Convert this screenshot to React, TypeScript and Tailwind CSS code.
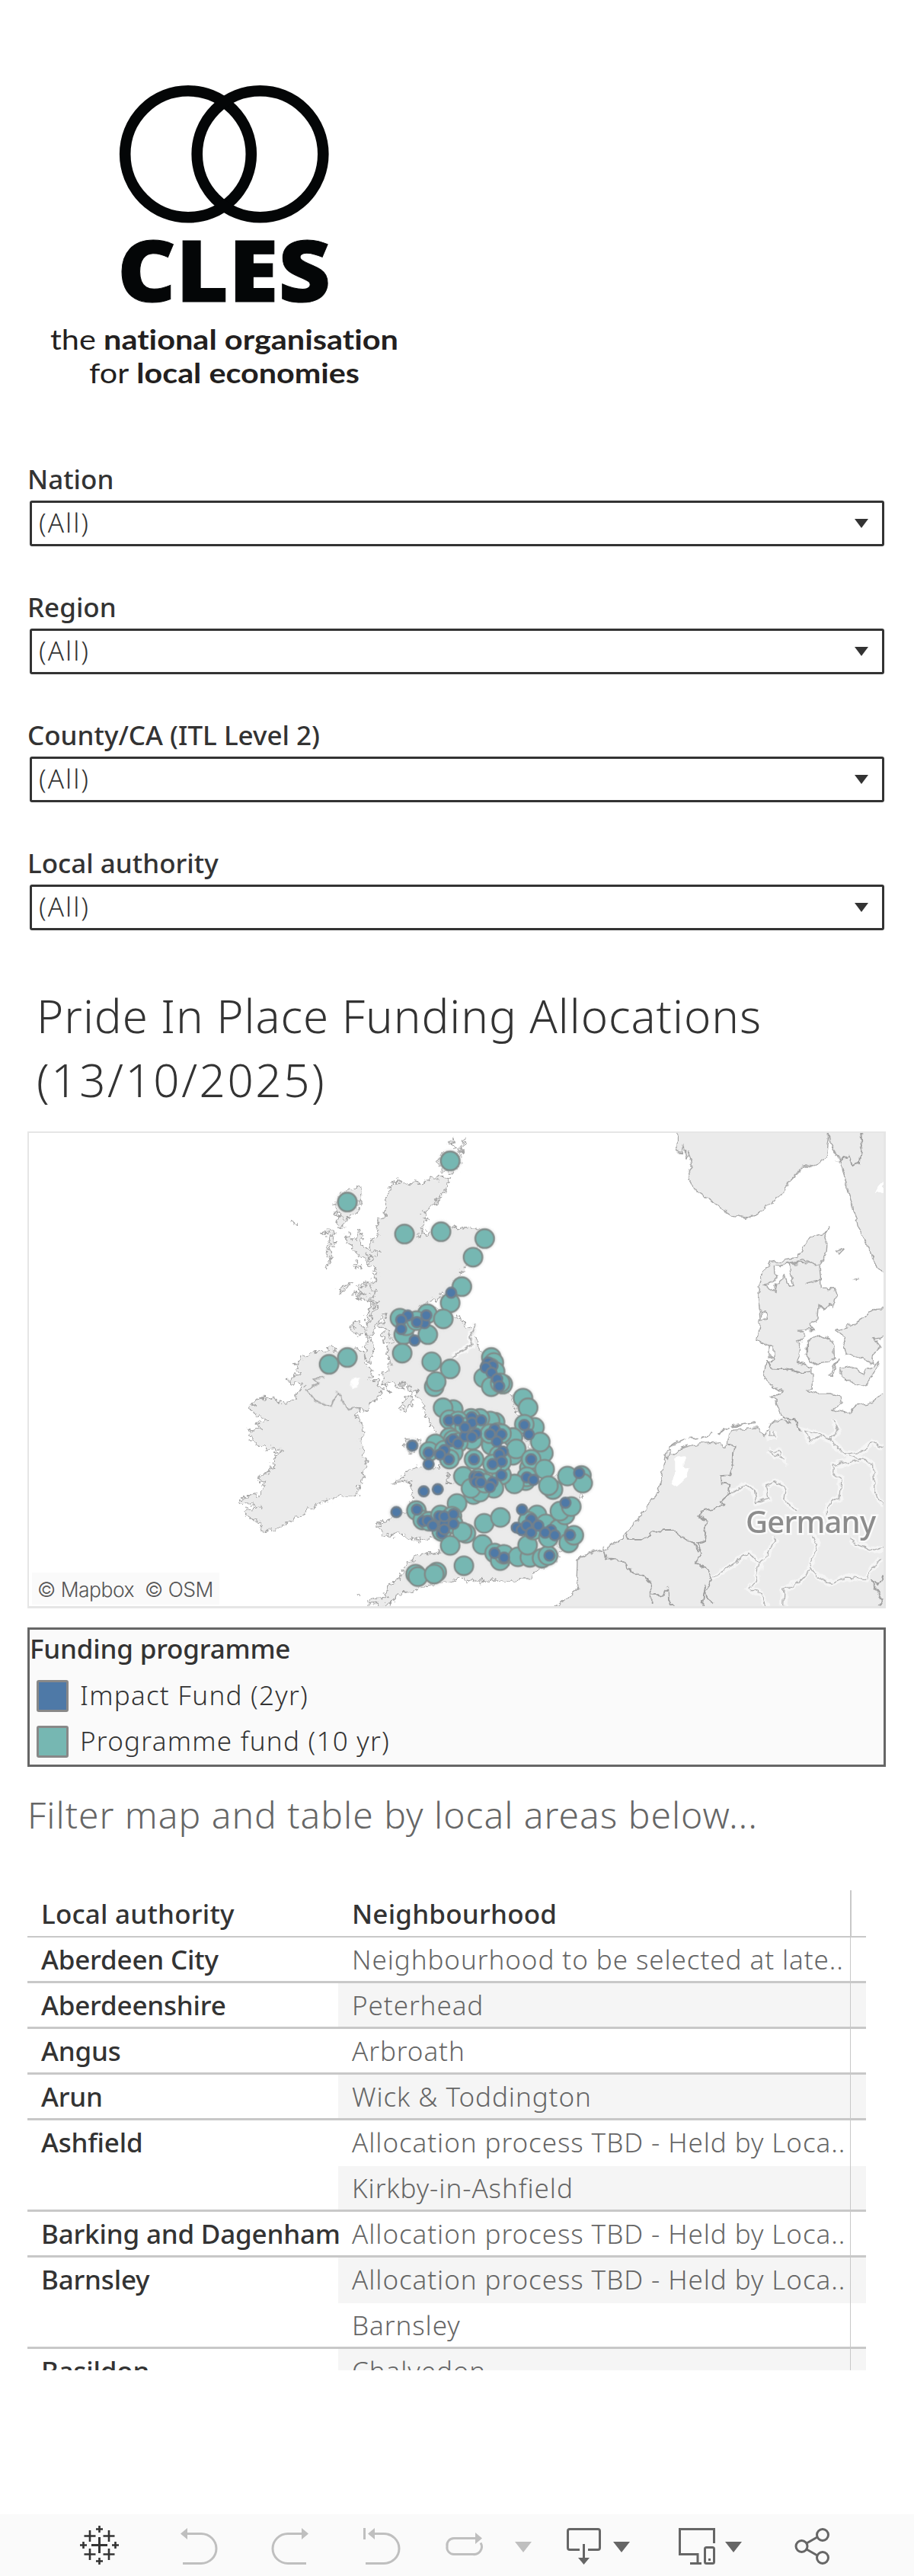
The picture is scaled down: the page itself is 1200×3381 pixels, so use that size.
import { Fragment } from "react";

const filters = ["Nation", "Region", "County/CA (ITL Level 2)", "Local authority"];

const legend = [
  { label: "Impact Fund (2yr)", color: "bg-[#4e79a7]" },
  { label: "Programme fund (10 yr)", color: "bg-[#76b7b2]" },
];

const TBD = "Allocation process TBD - Held by Loca..";

const areas = [
  { name: "Aberdeen City", places: ["Neighbourhood to be selected at late.."] },
  { name: "Aberdeenshire", places: ["Peterhead"] },
  { name: "Angus", places: ["Arbroath"] },
  { name: "Arun", places: ["Wick & Toddington"] },
  { name: "Ashfield", places: [TBD, "Kirkby-in-Ashfield"] },
  { name: "Barking and Dagenham", places: [TBD] },
  { name: "Barnsley", places: [TBD, "Barnsley"] },
  { name: "Basildon", places: ["Chalvedon"] },
];

// Map marks, in the same units as the British Isles outlines
const programmeFund = [
  [873, 131], [468, 293], [693, 419], [837, 410], [1009, 437], [963, 510], [919, 626], [873, 690],
  [675, 750], [783, 733], [846, 753], [690, 815], [700, 780], [740, 760], [785, 815], [684, 888],
  [800, 922], [873, 950], [468, 905], [396, 932], [810, 1020], [818, 1000], [1035, 905], [1045, 925],
  [1030, 945], [1050, 960], [1005, 985], [1035, 1020], [1080, 1010], [1070, 1005], [885, 1110],
  [845, 1103], [1160, 1065], [1180, 1103], [1205, 1180], [1165, 1168], [1240, 1282], [1228, 1238],
  [1120, 1220], [1120, 1290], [1133, 1265], [1185, 1340], [1192, 1306], [1245, 1345], [1390, 1370],
  [1395, 1400], [1335, 1372], [1278, 1425], [1260, 1410], [1170, 1390], [1175, 1375], [1126, 1403],
  [1075, 1368], [1045, 1420], [965, 1445], [990, 1435], [925, 1373], [955, 1420], [985, 1380],
  [1010, 1400], [1050, 1160], [1030, 1155], [990, 1145], [955, 1145], [870, 1150], [905, 1155],
  [930, 1180], [990, 1200], [960, 1230], [870, 1220], [885, 1230], [905, 1240], [815, 1245],
  [790, 1275], [850, 1270], [885, 1280], [870, 1305], [967, 1306], [1035, 1250], [1065, 1290],
  [1075, 1315], [1040, 1325], [1060, 1200], [1030, 1205], [1075, 1205], [900, 1480], [740, 1508],
  [765, 1545], [790, 1550], [835, 1525], [850, 1550], [840, 1590], [880, 1530], [885, 1560],
  [935, 1598], [920, 1592], [873, 1645], [1007, 1558], [1071, 1535], [1000, 1642], [1048, 1675],
  [1070, 1705], [1085, 1680], [1140, 1690], [1187, 1692], [1178, 1644], [1235, 1695], [1258, 1685],
  [1215, 1525], [1180, 1550], [1200, 1585], [1250, 1560], [1260, 1615], [1300, 1580], [1340, 1635],
  [1360, 1605], [1325, 1525], [1305, 1510], [1350, 1492], [927, 1725], [737, 1758], [746, 1768],
  [820, 1750], [810, 1758],
];

const impactFund = [
  [877, 650], [706, 740], [680, 757], [680, 793], [772, 770], [742, 766], [779, 739], [733, 838],
  [1023, 925], [1040, 938], [1013, 945], [1036, 965], [1058, 990], [1066, 1018], [724, 1252],
  [788, 1280], [788, 1325], [850, 1270], [833, 1287], [868, 1306], [868, 1153], [904, 1152],
  [958, 1140], [959, 1162], [995, 1152], [931, 1215], [931, 1180], [975, 1205], [959, 1218],
  [875, 1235], [885, 1227], [904, 1244], [1048, 1188], [1030, 1207], [1075, 1208], [1057, 1236],
  [967, 1306], [1080, 1275], [1066, 1287], [1076, 1315], [1040, 1325], [1165, 1171], [1183, 1208],
  [1192, 1306], [1381, 1360], [1175, 1377], [1201, 1387], [1075, 1368], [970, 1375], [985, 1375],
  [975, 1395], [994, 1396], [1040, 1397], [1030, 1415], [769, 1432], [824, 1424], [661, 1514],
  [742, 1504], [765, 1550], [785, 1548], [805, 1567], [830, 1530], [850, 1560], [850, 1531],
  [886, 1522], [886, 1560], [840, 1598], [850, 1582], [1156, 1504], [1192, 1542], [1135, 1575],
  [1155, 1585], [1174, 1567], [1220, 1567], [1192, 1595], [1270, 1585], [1247, 1595], [1285, 1605],
  [1345, 1604], [1327, 1477], [1264, 1685], [1048, 1675], [1085, 1693],
];

const isles = [
  // Great Britain
  "M652 205l8 12 8-8 10 12 2-8 14 14 6-12 16 10 12-10 22 4 20-6 20-4 6-6 20-6 10 4 8-8h34l-4 12 4 20-8 23-16 14-24 24-12 16-28 22-15 30 22 8-22 28-18 42 20-24 20 10 60-20 30-5 50 3 46-5 35 32-40 60-30 60-60 90-90 60-40 15 70 5 35 8 22 16 43 16 15 30 35 35 8 25 22 50 30 70 30 40 70 70 20 90 35 80 25 80-40 60 80-16 58 10 70 28 14 54-40 44-60 60-40 30-70 30 100 4 36 36-30 44-70 28-30 43-70 4h-80l-60 3-25-10-10 14-14-16-60 10-60 14-44 6-42 24-54 10-28 38 6-16-30 30-6 24-18-20-12-18-30 8-4-16 26-14 38-2 22-40 28-26 30-30 10-44 30-2 8-28 30-6 38 2 50-20-10-40-30-6-60 14-50-10-40-26-40 24-42-46 26-14 50-26 50-24 14-46-6-40-2-30-38 10-30 4 40-28 15-16 35-20 50-10 40 20 20-40-20-60-10-50-20-20-30-80-20-40-10-30-22 10-8-14-10 4-15-34 4 44-24-14-30-24-8 4 16 44-28-36-8-34 16-10 22-36-20-40 10-50-10-40-30-15 36-54-20 8-26 42-24 50 14 40-12 48-26-5 14-70-5-40 20-64-16-10 22-40-40-40 42 20-2-14-70 8-12-14 48 10-20-24 40 10-26-26 38 4-10-20 26-4-14-20 20-6-12-16 14-8-36-6-4-60 12-40 30-20-8-30 10-40 20-10 8-40-4-20z",
  // Ireland
  "M235 992l40-17-10-40 35-30 16-14 24-6 50-8 10-17 30 20 90-4 15 14 10 40 30 42-25 20 40 10 15 32-15 40-30 6-20 35-25-5-15 8 18 35 12 40-10 50 23 70-13 60-20 40-2 40-58-2-40 12-40 10-70 45-60 35-80 35-35-10 5-25-55-20-15-25 70-15-90-17 20-23 70-10 10-50-25-10 55-40 15-60 35-15-70-5-60-30-10-40 50-10-20-15 45-20-45-15-30-30 30-30 20-10 60 5 10 15 65-10-5-20 40-35-60-15z",
  // Hebrides and the western islands
  "M515 230l8 16-4 44-18 50-40 20-40-26-4-24 24-50 40-20z",
  "M440 350l30 12-24 26-24-12zM372 412l20-10 22 4-4 24-20-8zM395 432l22-8 4 36-18 12 6 44-16 8-8-44 12-22zM384 545l20-25-4 20-20 18z",
  "M510 398l18 24-6 40 30 18 50 10-40 20-42 4-50-62-12-8 22-24 16 20z",
  "M490 604l-14 20-38 26-4-12 40-22zM500 530l18 10-8 14-14-8zM550 505l20 8-20 22-8-8z",
  "M510 620l40-8 30 40-40 24-40 6 40-30-30-16z",
  "M540 740l30-40 20-10-30 50-14 40zM515 760l24 34-24 24-28-16 6-34z",
  "M618 798l14-2 12 40-10 14-20-10-6-26zM832 110l30-16 50 10 6 40-40 36-46-20z",
  "M866 55l18-6-4 20 18 12 24-20 14-18-6 26-20 14 10 16-26-20zM718 1045l8 4-4 40-32 26-18 0 20-40z",
  "M690 1250l20-24 40 4 10 30-30 22-20-6zM862 1362l8 8-8 20 10 4-14 2 4-18z",
  "M505 1842l10-4-4 10zM252 372h12l-6 6z",
];

const mainland = [
  // Norway and Sweden
  "M325 -20l5 35-4 60 20 2 8-20 12 50 6-30 14 40-16 28 4 20 23 34 95 56 50 27 55 10 65-25 70-45 40-50 60-50 30 3 50-28 10-65V-20z",
  "M925-20l0 40 5 30 35 50 20 50 15 60 20 50 20 60 40 60 35 75 40 13V-20z",
  // Jutland down to France
  "M925 317l-16 24 9 29-3 35-27 35 7 75 55 2 10 28-25 35-10-14-20 20-20-16-3 45-32 15 15 20-55 5 20 15-30 20 15 25-15 40 60 15 2 65-22 7 40 13 50 0 45 10 3 20-38 20 60 15 30-25 60-10 60-40v740H-219l123-80 36-24-9-22 3-69 27-14 84-23 65-32 40-40 55-55 50-55 20-90 10-24 60-26 60-14 90-6 12 18 12-2 4-36 24-18 90-8 35 30 15-35 30-20 60 10-40-25-20-45-20-10 45-20-55-25-20-25 10-45 30-5-5-40-60-28 10-52-5-60 2-60 13-40 35-38 40-4 60-8 50-65 55-10z",
  // Danish islands
  "M838 690l52-25 24 12 30 12 2 50-30 14-56 6-22-24zM955 650l60-14 36-20 60-32 40-2v88l-50 10 26 26-36 30 10 22-30-10-30-12-50-8-10-34 12-20zM962 775l40-8 30 10 30 20 10-20 50-22-50 75-50-12-40-12zM940 800l20-62-16 30-14 30zM955 396l30-8-20 16zM1022 488h18l-10 5z",
  // Frisian islands
  "M278 1056l14-22 10 4-10 30zM292 1030l36-22 34-8-34 14zM374 998l30-2-30 4zM420 996l50-12-50 14zM486 980l44-14-40 16zM542 960l60-10-56 12zM608 950l32-2-30 4z",
];

const inlandWater = [
  "M706 448l60-12 4 30 16 44-18-4-14-30-34 24-6 28-44-20 32-10 26-22-20-4z",
  "M655 588l20 4 4 22-22 12zM690 700l18 4v40l-18-6z",
  "M762 438l60-10 62 14-62-8zM836 500l56-12-28 12z",
];

const lakes = ["M316 1066l40-10 0 34 24 10-24 34-30 20-18-8 8-40z", "M1140 130v80l-30 0 30-40z"];

const nationalBorders = [
  "M1050 15l6 44-10 56-30 8-12-38-44 26",
  "M680 745l20 28 50 2 60 12 44 0",
  "M525 1018l26 4-4 60-12 36-40 2 2 24 38 4-4 30-28 22 8 14-90 20-6 14 28 20-8 60-30 8 20 30-24 40 40 8 30 40-40 40-10 60",
  "M128 1305l10 20 50 0 60-30 60-2 40 26 44 16 20 28M40 1345l10 40 60 4 24 30 60 20 30 30v60M222 1500l50 4 20-24 2 40 30 28M430 1470l10 40 34 20M1140 1440l-20 30-30-14 46 60-16 24M740 935l50 6 20 34",
];

const stateBorders = [
  "M945 935l14 40-30 30-60-24-40-8 20 34 40-16M929 1005l60 44 60-6 50-30 40 14M1000 1055l60 10 40 24 4 80 34 46M1040 1070l-94 14-2 30 28 16-6 60-50 24v40",
  "M535 1178l60-30 36 20 10 36 44-10-12-40 36-14 50 20-10 36 50 40",
  "M460 1450l60-30 90-50 40 30 40-34 24-46M650 1400l-10 60-30 20 50 20 24 44M860 1310l20 30-30 70 10 20 70 36 60-20 80 6 60-70M850 1420l-40 40-60 24-4 56M1010 1320l20 20 70 20 40-10M690 1040l50 24-10-20-40-8M692 975v20h16v-20",
];

const BRITISH_ISLES = "translate(300 1480) scale(0.33333)";
const EUROPE = "translate(780 1480) scale(0.33333 0.40816)";

const Logo = () => (
  <svg className="block h-[460px] w-[520px]" viewBox="36 80 520 460" role="img" aria-label="CLES">
    <g fill="none" stroke="#040607">
      <ellipse cx="247" cy="202.3" rx="82.8" ry="83" strokeWidth="14.6" />
      <ellipse cx="341.5" cy="202.3" rx="82.8" ry="83" strokeWidth="14.6" />
    </g>
    <text
      x="154"
      y="395.5"
      textLength="280"
      lengthAdjust="spacingAndGlyphs"
      fill="#040607"
      stroke="#040607"
      strokeWidth="1"
      className="font-['Open_Sans'] text-[112px] font-extrabold"
    >
      CLES
    </text>
    <g fill="#231f20" className="font-[Lato] text-[37px] font-bold [font-variant-ligatures:none]">
      <text x="66" y="459" textLength="457" lengthAdjust="spacingAndGlyphs">
        <tspan fontWeight="400">the</tspan> national organisation
      </text>
      <text x="117" y="502.5" textLength="355" lengthAdjust="spacingAndGlyphs">
        <tspan fontWeight="400">for</tspan> local economies
      </text>
    </g>
  </svg>
);

const Filter = ({ label }: { label: string }) => (
  <div className="mb-[55px]">
    <div className="h-[53px] pt-px text-[35px] leading-[48px] font-medium">{label}</div>
    <button className="mx-[3px] flex h-[60px] w-[1122px] items-center justify-between rounded-[3px] border-3 border-[#333] pr-[18px] pb-[2px] pl-[9px] text-[35px] font-light tracking-[2px]">
      (All)
      <svg className="mt-[2px] h-3 w-[18px]" viewBox="0 0 18 12">
        <path d="M0 0h18l-9 12z" fill="#333" />
      </svg>
    </button>
  </div>
);

const FundingMap = () => (
  <div className="relative mt-[26px] h-[626px] w-[1127px] overflow-hidden border-t-2 border-r-3 border-b-3 border-l-2 border-[#e6e6e6]">
    <svg className="block h-[621px] w-[1122px]" viewBox="38 1487 1122 621">
      <defs>
        <filter id="coast" x="-5%" y="-5%" width="110%" height="110%" colorInterpolationFilters="sRGB">
          <feTurbulence type="fractalNoise" baseFrequency="0.14" numOctaves="3" seed="4" />
          <feDisplacementMap in="SourceGraphic" scale="14" xChannelSelector="R" yChannelSelector="G" />
        </filter>
        <filter id="border" x="-5%" y="-5%" width="110%" height="110%" colorInterpolationFilters="sRGB">
          <feTurbulence type="fractalNoise" baseFrequency="0.1" numOctaves="2" seed="9" />
          <feDisplacementMap in="SourceGraphic" scale="9" xChannelSelector="R" yChannelSelector="G" />
        </filter>
        <filter id="glow" x="-10%" y="-10%" width="120%" height="120%">
          <feGaussianBlur stdDeviation="3" />
        </filter>
      </defs>

      <g filter="url(#coast)" fill="#ebebeb" stroke="#a6a6a6" strokeWidth="1.4">
        <g transform={BRITISH_ISLES}>
          {isles.map((d) => (
            <path key={d} d={d} vectorEffect="non-scaling-stroke" />
          ))}
        </g>
      </g>
      <g filter="url(#border)" fill="#ebebeb" stroke="#a6a6a6" strokeWidth="1.4">
        <g transform={EUROPE}>
          {mainland.map((d) => (
            <path key={d} d={d} vectorEffect="non-scaling-stroke" />
          ))}
          {inlandWater.map((d) => (
            <path key={d} d={d} fill="#fff" vectorEffect="non-scaling-stroke" />
          ))}
          {lakes.map((d) => (
            <path key={d} d={d} fill="#fff" stroke="none" />
          ))}
        </g>
      </g>

      <g filter="url(#border)" fill="none">
        <g transform={EUROPE}>
          {stateBorders.map((d) => (
            <Fragment key={d}>
              <path d={d} stroke="#f5f5f5" strokeWidth="8" vectorEffect="non-scaling-stroke" />
              <path d={d} stroke="#b0b0b0" strokeWidth="1.3" vectorEffect="non-scaling-stroke" />
            </Fragment>
          ))}
          {nationalBorders.map((d) => (
            <path key={d} d={d} stroke="#9e9e9e" strokeWidth="1.8" vectorEffect="non-scaling-stroke" />
          ))}
        </g>
        <g transform={BRITISH_ISLES}>
          <path d="M485 990l30-6-6 34-28 8z" fill="#fff" />
          <path d="M975 775l-25 45 10 35-50 30-25 20" stroke="#f8f8f8" strokeWidth="24" />
          <path d="M975 775l-25 45 10 35-50 30-25 20M380 982l-45 6 20 16-47 31 32 40 60 22 30-54 40 68 45-10" stroke="#9e9e9e" strokeWidth="5" />
        </g>
      </g>

      <g transform={BRITISH_ISLES}>
        <g filter="url(#glow)" fill="#e4e4e4" opacity="0.6">
          {programmeFund.map(([x, y]) => (
            <circle key={`${x}-${y}`} cx={x} cy={y} r="46" />
          ))}
          {impactFund.map(([x, y]) => (
            <circle key={`${x}-${y}`} cx={x} cy={y} r="31" />
          ))}
        </g>
        <g fill="#76b7b2" stroke="#808b89" strokeWidth="7">
          {programmeFund.map(([x, y]) => (
            <circle key={`${x}-${y}`} cx={x} cy={y} r="37" />
          ))}
        </g>
        <g fill="#4e79a7" stroke="#72808c" strokeWidth="8">
          {impactFund.map(([x, y]) => (
            <circle key={`${x}-${y}`} cx={x} cy={y} r="20" />
          ))}
        </g>
      </g>

      <text
        x="979"
        y="2012"
        textLength="171"
        fill="#8c8c8c"
        stroke="#fafafa"
        strokeWidth="5"
        paintOrder="stroke"
        className="font-['Noto_Sans'] text-[40px] font-medium"
      >
        Germany
      </text>
    </svg>
    <div className="absolute bottom-[2px] left-1 h-[42px] w-[246px] bg-[#fafafa] pl-[7px] font-[Inter] text-[26.5px] leading-[45px] font-light tracking-[-0.5px] whitespace-pre text-[#555]">
      © Mapbox  © OSM
    </div>
  </div>
);

const Legend = () => (
  <div className="mt-[25px] h-[183px] w-[1127px] border-3 border-[#666] bg-[#fafafa]">
    <div className="pt-px text-[35px] leading-[48px] font-medium tracking-[-0.2px]">Funding programme</div>
    {legend.map(({ label, color }, i) => (
      <div key={label} className={`flex h-[60px] items-center pl-[9px] ${i === 0 ? "mt-[8px]" : ""}`}>
        <span className={`h-[42px] w-[42px] rounded-[3px] border-3 border-[#888] ${color}`} />
        <span className="ml-[15px] pb-[3px] text-[35px] leading-[57px] font-light tracking-[1.25px]">{label}</span>
      </div>
    ))}
  </div>
);

const AreaTable = () => {
  let row = 0;
  return (
    <div className="mt-[69px] h-[630px] w-[1101px] overflow-hidden text-[35px] whitespace-nowrap">
      <div className="flex h-[62px] border-b-2 border-[#c8c8c8] leading-[62px] font-medium tracking-[0.2px]">
        <div className="w-[426px] pl-[18px]">Local authority</div>
        <div className="w-[654px]">Neighbourhood</div>
        <div className="border-l-2 border-[#c8c8c8]" />
      </div>
      {areas.map(({ name, places }) => (
        <div key={name} className="flex border-b-3 border-[#c8c8c8]">
          <div className="w-[408px] pl-[18px] leading-[57px] font-medium tracking-[-0.2px]">{name}</div>
          <div>
            {places.map((place, i) => (
              <div
                key={place}
                className={`flex ${i === places.length - 1 ? "h-[57px]" : "h-[60px]"} ${row++ % 2 ? "bg-[#f5f5f5]" : ""}`}
              >
                <div className="w-[672px] pl-[18px] leading-[57px] font-light tracking-[0.93px] text-[#666]">{place}</div>
                <div className="w-[21px] border-l border-[#c8c8c8]" />
              </div>
            ))}
          </div>
        </div>
      ))}
    </div>
  );
};

const Toolbar = () => (
  <div className="mt-[189px] h-[81px] bg-[#fafafa]">
    <svg className="block h-[81px] w-[1200px]" viewBox="0 0 1200 81" fill="none" strokeWidth="3">
      {/* Tableau mark */}
      <g stroke="#333">
        <path d="M130.5 30v21M120 40.5h21" />
        <path d="M118 21v15M110.5 28.5h15M143 21v15M135.5 28.5h15M118 45v15M110.5 52.5h15M143 45v15M135.5 52.5h15" strokeWidth="2.6" />
        <path d="M130.5 15v9M126 19.5h9M130.5 57v9M126 61.5h9M109.500 36v9M105 40.5h9M151.5 36v9M147 40.5h9" strokeWidth="2.6" />
      </g>
      <g stroke="#bfbfbf">
        <path d="M245 25.5h19a20 19.5 0 0 1 0 39h-24" />
        <path d="M397 25.5h-19a20 19.5 0 0 0 0 39h24" />
        <path d="M478.5 18v15M490 25.5h14a20 19.5 0 0 1 0 39h-24" />
        <path d="M625 31.5h-29a9 9 0 0 0-9 10.5 9 9 0 0 0 9 10.5h25a10 10 0 0 0 10-15" />
      </g>
      <path
        d="M237 25.5l9-7.5v15zM405 25.5l-9-7.5v15zM483 25.5l9-7.5v15zM633 31.5l-9-7.5v15zM676 36h22l-11 14z"
        fill="#bfbfbf"
      />
      <g stroke="#666">
        <path d="M761 46.5h-13a2.5 2.5 0 0 1-2.500-2.5V22a2.5 2.5 0 0 1 2.5-2.500h37a2.5 2.5 0 0 1 2.5 2.5v22a2.5 2.5 0 0 1-2.5 2.5h-13M766.500 39v20" />
        <path d="M937.5 38V19.5h-45v33h23.5v12M906 64.5h15" />
        <rect x="925.5" y="43.5" width="12" height="21" rx="2" />
        <circle cx="1080" cy="27" r="7.5" />
        <circle cx="1052.5" cy="42" r="7.5" />
        <circle cx="1080" cy="57" r="7.5" />
        <path d="M1059 38l14-8M1059 46l14 8" />
      </g>
      <path d="M759 57h15l-7.500 9zM805 36h22l-11 14zM952 36h22l-11 14zM930 58h3v3h-3z" fill="#666" />
    </svg>
  </div>
);

export default function App() {
  return (
    <main className="w-[1200px] bg-white font-['Noto_Sans',sans-serif] text-[#333]">
      <div className="pt-20 pl-9">
        <Logo />
        <div className="mt-16">
          {filters.map((label) => (
            <Filter key={label} label={label} />
          ))}
        </div>
        <h1 className="mt-[70px] w-[1050px] pl-3 text-[60px] leading-[84px] font-light tracking-[0.95px]">
          Pride In Place Funding Allocations <span className="tracking-[2.6px]">(13/10/2025)</span>
        </h1>
        <FundingMap />
        <Legend />
        <p className="mt-[33px] text-[48px] leading-[60px] font-light tracking-[1px] text-[#666]">
          Filter map and table by local areas below...
        </p>
        <AreaTable />
      </div>
      <Toolbar />
    </main>
  );
}
